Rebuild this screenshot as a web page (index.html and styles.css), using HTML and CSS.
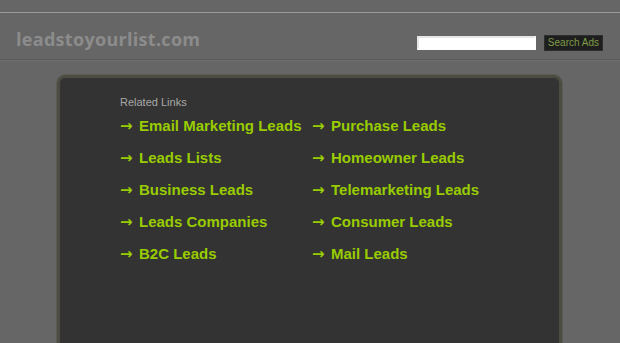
FILE: index.html
```html
<!DOCTYPE html>
<html>
<head>
<meta charset="utf-8">
<link rel="stylesheet" href="styles.css">
</head>
<body>
<div class="topline"></div>
<header class="header">
  <div class="logo">leadstoyourlist.com</div>
  <form class="search">
    <input class="search-input" type="text">
    <button class="search-btn" type="button">Search Ads</button>
  </form>
</header>
<main class="box">
  <div class="related">Related Links</div>
  <div class="links">
    <ul class="col">
      <li><span class="arr">&#8594;</span><a href="#">Email Marketing Leads</a></li>
      <li><span class="arr">&#8594;</span><a href="#">Leads Lists</a></li>
      <li><span class="arr">&#8594;</span><a href="#">Business Leads</a></li>
      <li><span class="arr">&#8594;</span><a href="#">Leads Companies</a></li>
      <li><span class="arr">&#8594;</span><a href="#">B2C Leads</a></li>
    </ul>
    <ul class="col">
      <li><span class="arr">&#8594;</span><a href="#">Purchase Leads</a></li>
      <li><span class="arr">&#8594;</span><a href="#">Homeowner Leads</a></li>
      <li><span class="arr">&#8594;</span><a href="#">Telemarketing Leads</a></li>
      <li><span class="arr">&#8594;</span><a href="#">Consumer Leads</a></li>
      <li><span class="arr">&#8594;</span><a href="#">Mail Leads</a></li>
    </ul>
  </div>
</main>
</body>
</html>
```
FILE: styles.css
```css
html, body {
  margin: 0;
  padding: 0;
  background: #666666;
  height: 343px;
  overflow: hidden;
  font-family: "Liberation Sans", Arial, sans-serif;
}
.topline {
  height: 12px;
  border-bottom: 1px solid #9a9a9a;
}
.header {
  height: 46px;
  border-bottom: 1px solid #5a5a5a;
  box-shadow: 0 1px 0 #6e6e6e;
  display: flex;
  align-items: flex-start;
  justify-content: space-between;
  padding: 0 17px 0 16px;
}
.logo {
  margin-top: 14px;
  font-family: "Open Sans", "Liberation Sans", sans-serif;
  font-weight: 700;
  font-size: 18px;
  line-height: 24px;
  color: #8c8c8c;
  letter-spacing: 0.3px;
}
.search {
  margin: 22px 0 0 0;
  display: flex;
  align-items: center;
  gap: 8px;
}
.search-input {
  width: 115px;
  height: 10px;
  padding: 0;
  margin: 0;
  border: 2px solid #ffffff;
  border-color: #e6e6e6 #ffffff #ffffff #e6e6e6;
  background: #ffffff;
  outline: none;
}
.search-btn {
  height: 16px;
  padding: 0 3px;
  margin: 0;
  background: #1e1e1e;
  color: #7d9c46;
  border: 1px solid #2d2d2d;
  font-family: "Liberation Sans", Arial, sans-serif;
  font-size: 10px;
  line-height: 14px;
}
.box {
  margin: 15px 0 0 57px;
  width: 505px;
  height: 300px;
  box-sizing: border-box;
  background: #333333;
  border: 3px solid #4c4c43;
  border-bottom: none;
  border-radius: 8px 8px 0 0;
  padding: 18px 0 0 60px;
  outline: 1px solid #5c5c55;
}
.related {
  font-size: 11px;
  line-height: 13px;
  color: #a9a9a9;
}
.links {
  display: flex;
  margin-top: 8px;
}
.col {
  list-style: none;
  margin: 0;
  padding: 0;
}
.col:first-child {
  width: 192px;
}
.col li {
  height: 32px;
  display: flex;
  align-items: flex-start;
  font-size: 15px;
  font-weight: 700;
  line-height: 18px;
  color: #99cc00;
}
.arr {
  width: 19px;
  flex: none;
  font-family: "DejaVu Sans", sans-serif;
  font-weight: 700;
  font-size: 15px;
  line-height: 18px;
}
.col a {
  color: #99cc00;
  text-decoration: none;
  letter-spacing: 0;
}
```
